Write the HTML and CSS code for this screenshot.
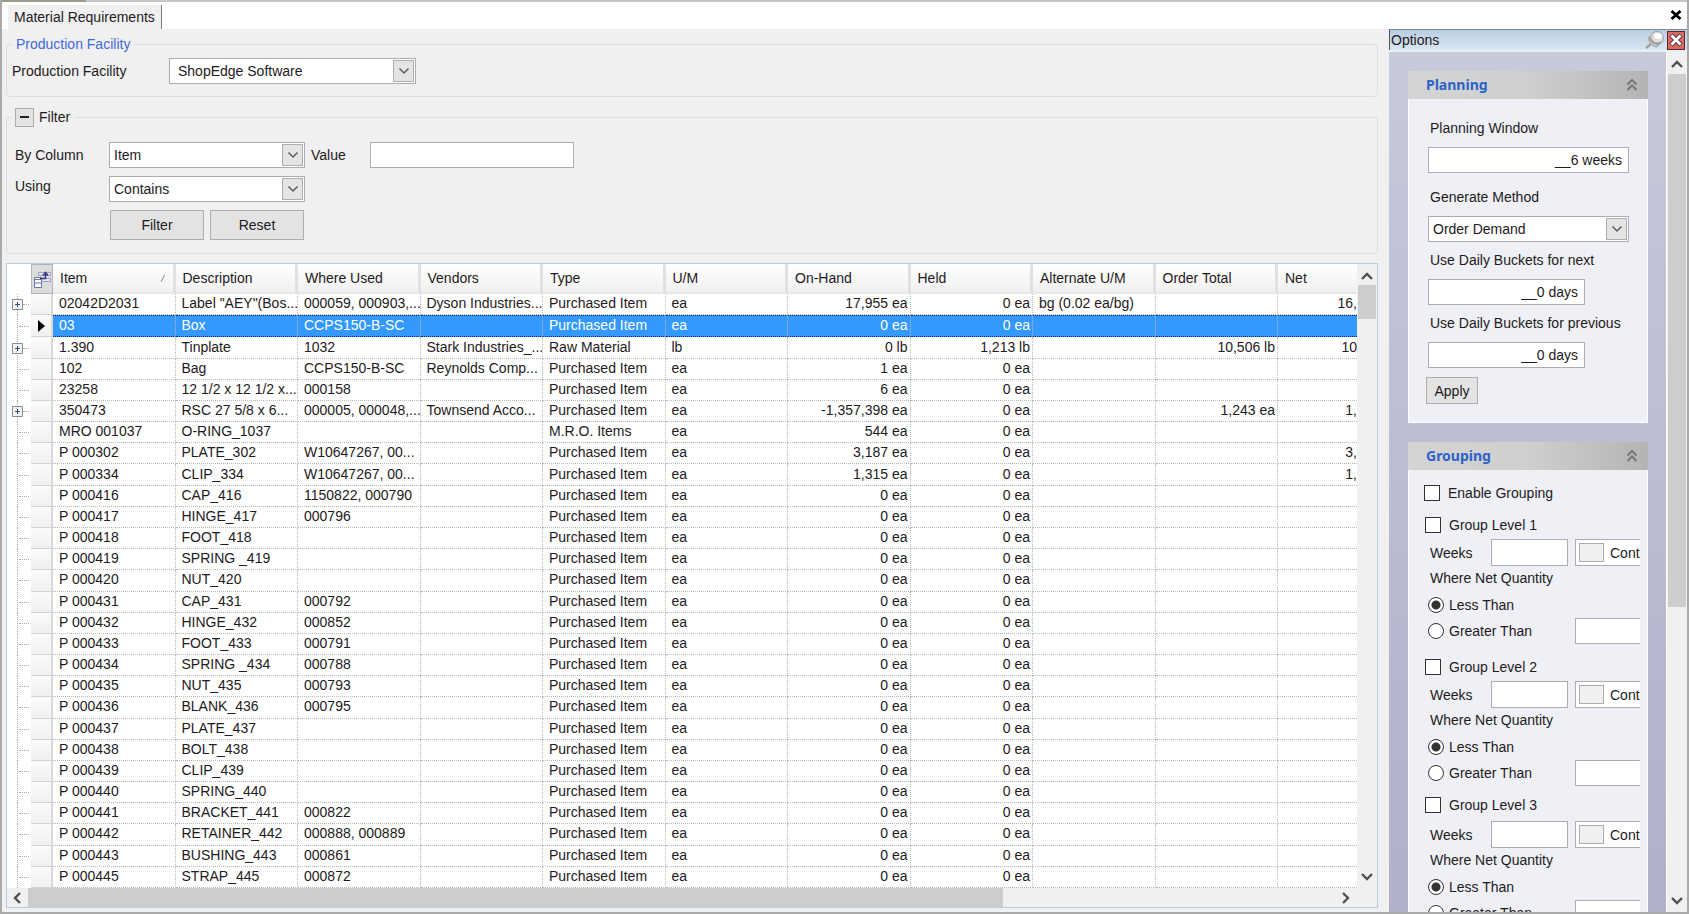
FILE: index.html
```html
<!DOCTYPE html>
<html lang="en">
<head>
<meta charset="utf-8">
<title>Material Requirements</title>
<link rel="stylesheet" href="styles.css">
</head>
<body>
<svg class="defs" aria-hidden="true">
  <symbol id="up" viewBox="0 0 12 8"><path d="M1 7 6 2l5 5" fill="none" stroke="#505050" stroke-width="2.4"/></symbol>
  <symbol id="down" viewBox="0 0 12 8"><path d="M1 1l5 5 5-5" fill="none" stroke="#505050" stroke-width="2.4"/></symbol>
  <symbol id="left" viewBox="0 0 8 12"><path d="M7 1 2 6l5 5" fill="none" stroke="#505050" stroke-width="2.4"/></symbol>
  <symbol id="right" viewBox="0 0 8 12"><path d="M1 1l5 5-5 5" fill="none" stroke="#505050" stroke-width="2.4"/></symbol>
  <symbol id="drop" viewBox="0 0 12 8"><path d="M1.5 1.5 6 6l4.500-4.500" fill="none" stroke="#5c5c5c" stroke-width="1.500"/></symbol>
  <symbol id="collapse" viewBox="0 0 12 14"><path d="M1.500 6.500 6 2l4.500 4.500M1.500 12 6 7.500l4.500 4.500" fill="none" stroke="#777" stroke-width="2"/></symbol>
</svg>
<div class="window">
  <div class="topline"></div>
  <header class="tabs">
    <button class="tab" type="button">Material Requirements</button>
    <button class="close" type="button" aria-label="Close"><svg width="12" height="10" viewBox="0 0 12 10"><path d="M1.500 1l9 8M10.500 1l-9 8" stroke="#000" stroke-width="2.800"/></svg></button>
  </header>
  <div class="work">
    <main class="main">
      <fieldset class="box facility">
        <legend class="legend-blue">Production Facility</legend>
        <label for="facility">Production Facility</label>
        <span class="combo combo-wide"><select id="facility"><option>ShopEdge Software</option></select><span class="arrow"><svg><use href="#drop"/></svg></span></span>
      </fieldset>
      <fieldset class="box filter">
        <legend class="legend-toggle"><button class="toggle" type="button" aria-label="Collapse filter"><svg width="9" height="2"><path d="M0 1h9" stroke="#222" stroke-width="2"/></svg></button><span>Filter</span></legend>
        <div class="filter-grid">
          <label for="column">By Column</label>
          <span class="combo"><select id="column"><option>Item</option></select><span class="arrow"><svg><use href="#drop"/></svg></span></span>
          <label class="value" for="value">Value</label>
          <input class="field" id="value" type="text">
          <label class="using" for="using">Using</label>
          <span class="combo"><select id="using"><option>Contains</option></select><span class="arrow"><svg><use href="#drop"/></svg></span></span>
          <div class="actions"><button class="btn" type="button">Filter</button><button class="btn" type="button">Reset</button></div>
        </div>
      </fieldset>
      <section class="grid">
        <div class="view">
          <table class="items">
            <colgroup><col class="c-tree"><col class="c-sel"><col><col><col><col><col><col><col><col><col><col><col class="c-net"></colgroup>
            <thead>
              <tr>
                <th class="corner"></th>
                <th class="chooser"><button type="button" aria-label="Choose columns"><svg width="18" height="19" viewBox="0 0 18 19"><path d="M5.500 2.500h12v3h-12z" fill="#e4e5f5" stroke="#a0a2c8"/><path d="M8.500 8.500h9v3h-9z" fill="#e4e5f5" stroke="#a0a2c8"/><path d="M1.500 7.500h7v10h-7z" fill="#fff" stroke="#7072a8"/><path d="M1 9.500h8M1 13h8" stroke="#7072a8"/><path d="M7 8.500h5.500V3M10 5.500 12.500 2.500 15 5.500" fill="none" stroke="#3a3c78" stroke-width="1.500"/></svg></button></th>
                <th><span class="sorted">Item <svg width="6" height="8"><path d="M1 8 4.500 1" stroke="#888"/></svg></span></th>
                <th>Description</th><th>Where Used</th><th>Vendors</th><th>Type</th><th>U/M</th><th>On-Hand</th><th>Held</th><th>Alternate U/M</th><th>Order Total</th><th>Net</th>
              </tr>
            </thead>
            <tbody id="rows"></tbody>
          </table>
        </div>
        <div class="vbar"><svg width="12" height="8"><use href="#up"/></svg><div class="thumb"></div><svg class="end" width="12" height="8"><use href="#down"/></svg></div>
        <div class="hbar"><svg width="8" height="12"><use href="#left"/></svg><div class="track"><div class="thumb"></div></div><svg width="8" height="12"><use href="#right"/></svg></div>
      </section>
    </main>
    <aside class="options">
      <div class="options-title">
        <span>Options</span>
        <button class="pin" type="button" aria-label="Pin"><svg width="20" height="18" viewBox="0 0 20 18"><path d="M1 17l5-4" stroke="#a0a0a0" stroke-width="2.500"/><path d="M4 6c3-1 11 5 9 9-3 3-11-4-9-9z" fill="#d4d4d4" stroke="#909090"/><circle cx="12" cy="7" r="6.500" fill="#dcdcdc" stroke="#a0a0a0"/><path d="M6 8c1 4 6 6 10 3" fill="none" stroke="#909090" stroke-width="1.500"/><ellipse cx="13" cy="5" rx="4" ry="3" fill="#fff"/></svg></button>
        <button class="shut" type="button" aria-label="Close options"><svg width="14" height="14" viewBox="0 0 14 14"><path d="M2 2l10 10M12 2 2 12" stroke="#5a4048" stroke-width="5"/><path d="M2.500 2.500l9 9M11.500 2.500l-9 9" stroke="#fff" stroke-width="2.800"/></svg></button>
      </div>
      <div class="options-body">
        <div class="panels">
          <section class="panel">
            <h2>Planning <svg width="12" height="14"><use href="#collapse"/></svg></h2>
            <div class="planning">
              <label for="window">Planning Window</label>
              <input class="field num" id="window" type="text" value="__6 weeks">
              <label for="method">Generate Method</label>
              <span class="combo"><select id="method"><option>Order Demand</option></select><span class="arrow"><svg><use href="#drop"/></svg></span></span>
              <label class="tight" for="next">Use Daily Buckets for next</label>
              <input class="field num short" id="next" type="text" value="__0 days">
              <label class="tight" for="previous">Use Daily Buckets for previous</label>
              <input class="field num short" id="previous" type="text" value="__0 days">
              <button class="btn apply" type="button">Apply</button>
            </div>
          </section>
          <section class="panel">
            <h2>Grouping <svg width="12" height="14"><use href="#collapse"/></svg></h2>
            <div class="grouping">
              <label class="check enable"><input type="checkbox">Enable Grouping</label>
              <div class="level">
                <label class="check"><input type="checkbox">Group Level 1</label>
                <div class="weeks"><label for="w1">Weeks</label><input class="field" id="w1" type="text"><button class="color" type="button"><i></i>Control</button></div>
                <div class="where">Where Net Quantity</div>
                <label class="radio"><input type="radio" name="q1" checked>Less Than</label>
                <div class="greater"><label class="radio"><input type="radio" name="q1">Greater Than</label><input class="field" type="text" aria-label="Quantity 1"></div>
              </div>
              <div class="level">
                <label class="check"><input type="checkbox">Group Level 2</label>
                <div class="weeks"><label for="w2">Weeks</label><input class="field" id="w2" type="text"><button class="color" type="button"><i></i>Control</button></div>
                <div class="where">Where Net Quantity</div>
                <label class="radio"><input type="radio" name="q2" checked>Less Than</label>
                <div class="greater"><label class="radio"><input type="radio" name="q2">Greater Than</label><input class="field" type="text" aria-label="Quantity 2"></div>
              </div>
              <div class="level last">
                <label class="check"><input type="checkbox">Group Level 3</label>
                <div class="weeks"><label for="w3">Weeks</label><input class="field" id="w3" type="text"><button class="color" type="button"><i></i>Control</button></div>
                <div class="where">Where Net Quantity</div>
                <label class="radio"><input type="radio" name="q3" checked>Less Than</label>
                <div class="greater"><label class="radio"><input type="radio" name="q3">Greater Than</label><input class="field" type="text" aria-label="Quantity 3"></div>
              </div>
            </div>
          </section>
        </div>
        <div class="vbar"><svg width="12" height="8"><use href="#up"/></svg><div class="thumb"></div><svg class="end" width="12" height="8"><use href="#down"/></svg></div>
      </div>
    </aside>
  </div>
</div>
<script src="grid.js"></script>
</body>
</html>
```
FILE: styles.css
```css
* { box-sizing: border-box; }
body { margin: 0; font: 14px/20px "Liberation Sans", Arial, sans-serif; color: #1e1a22; background: #f0f0f0; }
button, input, select { font: inherit; color: inherit; margin: 0; padding: 0; border-radius: 0; }
button { border: 0; background: none; display: flex; align-items: center; justify-content: center; }
svg { display: block; flex: none; }
.defs { position: absolute; width: 0; height: 0; }

.window { height: 100vh; display: flex; flex-direction: column; border: 2px solid #a9a9a9; border-top: 0; overflow: hidden; }
.topline { height: 2px; flex: none; background: linear-gradient(90deg, #9b9b90 84px, #c6c6c1 84px); }
.tabs { height: 27px; flex: none; display: flex; align-items: flex-end; justify-content: space-between; background: #fff; padding-left: 6px; }
.tab { height: 24px; padding: 0 6px; background: #f0f0f0; border-right: 1px solid #777; }
.close { width: 22px; height: 28px; }
.work { flex: 1; min-height: 0; display: flex; }
.main { flex: 1; min-width: 0; display: flex; flex-direction: column; padding: 6px 11px 4px 4px; }

.box { margin: 0; padding: 0; min-width: 0; border: 1px solid #d5dfe5; border-radius: 4px; }
.facility { display: flex; align-items: center; padding: 5px 0 12px 5px; }
.facility > label { width: 157px; }
.legend-blue { color: #4169e1; line-height: 18px; padding: 0 4px; }
.filter { margin-top: 10px; padding: 15px 0 13px; }
.legend-toggle { display: flex; align-items: center; gap: 5px; margin-left: 4px; padding: 0 4px; }
.toggle { width: 19px; height: 19px; border: 1px solid #adadad; background: #e3e3e3; }
.filter-grid { display: grid; grid-template-columns: 94px 196px 65px 204px; row-gap: 8px; align-items: center; padding-left: 8px; }
.value { padding-left: 6px; }
.using { align-self: start; }
.actions { grid-column: 2; grid-row: 3; display: flex; gap: 6px; padding-left: 1px; }
.btn { border: 1px solid #adadad; background: #e3e3e3; }
.actions .btn { width: 94px; height: 30px; }

.combo { position: relative; display: block; height: 26px; }
.combo select { width: 100%; height: 100%; appearance: none; border: 1px solid #abadb3; background: #fff; padding-left: 4px; }
.combo-wide { width: 247px; }
.combo-wide select { padding-left: 8px; }
.arrow { position: absolute; top: 2px; right: 2px; bottom: 2px; width: 21px; display: flex; align-items: center; justify-content: center; border: 1px solid #adadad; background: #e4e4e4; pointer-events: none; }
.arrow svg { width: 12px; height: 8px; }
.field { height: 26px; width: 100%; border: 1px solid #abadb3; background: #fff; }

.grid { flex: 1; min-height: 0; margin-top: 9px; display: grid; grid-template-columns: minmax(0, 1fr) 20px; grid-template-rows: minmax(0, 1fr) 19px; border: 1px solid #b9cbe0; background: #f0f0f0; }
.view { position: relative; overflow: hidden; background: #fff; }
.items { width: 100%; height: 100%; table-layout: fixed; border-collapse: separate; border-spacing: 0; }
.c-tree { width: 24px; }
.c-sel { width: 22px; }
.c-net { width: 79px; }
.items th { height: 30px; padding: 0 7px; text-align: left; font-weight: normal; background: linear-gradient(#fff, #f1f1f1); border-right: 3px solid #dfe2e2; border-bottom: 2px solid #e6e8e8; }
.items th:last-child { border-right: 0; }
.items .corner { background: #fff; border: 0; }
.items .chooser { padding: 0; border: 1px solid #b4b4b4; background: #dcdcdc; }
.chooser button { width: 100%; }
.sorted { display: flex; align-items: center; justify-content: space-between; }
.items td { padding: 0 2px 1px 6px; line-height: 17px; white-space: nowrap; overflow: hidden; border-right: 1px dotted #b8b8b8; border-bottom: 1px dotted #b8b8b8; }
.items td.num { text-align: right; }
.items td:last-child { padding-right: 0; border-right: 0; }
.items .tree { padding: 0; border: 0; background: repeating-linear-gradient(#aaa 0 1px, #fff 1px 2px) 10px 0 / 1px 100% no-repeat; }
.node { display: flex; align-items: center; padding-left: 5px; }
.node::after { content: ""; flex: 1; border-top: 1px dotted #aaa; margin-right: 2px; }
.node.leaf { padding-left: 12px; }
.items .sel { padding: 0 0 0 7px; background: linear-gradient(#fbfbfb, #f0f0f0); border-right: 2px solid #d9d9d9; border-bottom: 1px solid #d4d4d4; }
.current td { color: #fff; background: #39f; border-top: 1px dotted #06336b; border-bottom-color: #06336b; }
.current .sel, .current .tree { border-top: 0; }

.thumb { background: #cdcdcd; }
.vbar { display: flex; flex-direction: column; align-items: center; padding: 8px 1px 7px 0; background: #f0f0f0; }
.vbar .thumb { width: 18px; height: 34px; margin-top: 5px; }
.vbar .end { margin-top: auto; }
.hbar { grid-column: 1; display: flex; align-items: center; padding: 0 7px 0 6px; gap: 7px; }
.track { flex: 1; height: 100%; }
.track .thumb { width: 74.6%; height: 100%; }

.options { width: 298px; flex: none; display: flex; flex-direction: column; }
.options-title { height: 21px; flex: none; display: flex; align-items: center; gap: 2px; padding: 0 2px 0 1px; border-left: 1px solid #555; border-top: 1px solid #7c8894; background: linear-gradient(#b9cde0, #dae7f4); }
.options-title span { flex: 1; }
.shut { width: 18px; height: 19px; border: 1px solid #5c2430; background: #dc6a62; }
.options-body { flex: 1; min-height: 0; display: flex; border-top: 2px solid #eceef2; }
.panels { flex: 1; min-width: 0; overflow: hidden; padding: 19px 18px 0 19px; border-right: 1px solid #fff; background: linear-gradient(#c6cada, #b0b0ca); }
.options .vbar { width: 20px; flex: none; padding-right: 0; }
.options .vbar .thumb { height: 533px; margin-top: 6px; }
.panel { margin-bottom: 19px; background: #eff0f5; border: 1px solid #fff; border-top: 0; }
.panel h2 { margin: 0 -1px; height: 28px; padding: 0 10px 0 18px; display: flex; align-items: center; justify-content: space-between; font: bold 14px/28px "Noto Sans", sans-serif; color: #2c62c9; background: linear-gradient(90deg, #d4d4d4, #cfcfcf 50%, #b4b4b4); }
.planning { display: flex; flex-direction: column; padding: 19px 18px 18px 19px; }
.planning label { padding-left: 2px; margin-bottom: 9px; }
.planning label:not(:first-child) { margin-top: 14px; }
.planning label.tight { margin-top: 8px; }
.num.field { text-align: right; padding-right: 6px; }
.short { width: 157px; }
.apply { width: 52px; height: 27px; margin: 9px 0 0 -2px; }

.grouping { margin-right: 7px; padding: 8px 0 0 15px; overflow: hidden; }
.check, .radio { display: flex; align-items: center; }
.check { gap: 8px; height: 29px; }
.enable { margin-bottom: 3px; }
.check input { appearance: none; width: 16px; height: 16px; border: 1px solid #333; background: #fff; }
.level { padding-left: 1px; }
.level + .level { margin-top: 8px; }
.level.last { margin-top: 3px; }
.last .check { height: 32px; }
.weeks { display: grid; grid-template-columns: 61px 77px 65px; align-items: center; padding-left: 5px; }
.weeks .field { height: 27px; }
.color { width: 100px; height: 27px; margin-left: 7px; justify-content: flex-start; gap: 6px; padding-left: 3px; border: 1px solid #abadb3; background: #fff; }
.color i { width: 25px; height: 19px; border: 1px solid #adadad; background: #f0f0f0; }
.where { padding: 2px 0 4px 5px; }
.radio { gap: 5px; height: 26px; padding-left: 3px; }
.radio input { appearance: none; width: 16px; height: 16px; border: 1px solid #333; border-radius: 50%; background: #fff; }
.radio input:checked { background: radial-gradient(#333 4px, #fff 5px); }
.greater { display: grid; grid-template-columns: 150px 1fr; }
.greater .field { width: 100px; }
```
FILE: grid.js
```js
// name, description, where used, vendors, type, unit, on-hand, held, alternate, order total, net, expandable
const P = "Purchased Item";
const rows = [
  ["02042D2031", 'Label "AEY"(Bos...', "000059, 000903,...", "Dyson Industries...", P, "ea", "17,955 ea", "0 ea", "bg (0.02 ea/bg)", "", "16,", 1],
  ["03", "Box", "CCPS150-B-SC", "", P, "ea", "0 ea", "0 ea", "", "", "", 0],
  ["1.390", "Tinplate", "1032", "Stark Industries_...", "Raw Material", "lb", "0 lb", "1,213 lb", "", "10,506 lb", "10", 1],
  ["102", "Bag", "CCPS150-B-SC", "Reynolds Comp...", P, "ea", "1 ea", "0 ea", "", "", "", 0],
  ["23258", "12 1/2 x 12 1/2 x...", "000158", "", P, "ea", "6 ea", "0 ea", "", "", "", 0],
  ["350473", "RSC 27 5/8 x 6...", "000005, 000048,...", "Townsend Acco...", P, "ea", "-1,357,398 ea", "0 ea", "", "1,243 ea", "1,", 1],
  ["MRO 001037", "O-RING_1037", "", "", "M.R.O. Items", "ea", "544 ea", "0 ea", "", "", "", 0],
  ["P 000302", "PLATE_302", "W10647267, 00...", "", P, "ea", "3,187 ea", "0 ea", "", "", "3,", 0],
  ["P 000334", "CLIP_334", "W10647267, 00...", "", P, "ea", "1,315 ea", "0 ea", "", "", "1,", 0]
];
const parts = [
  ["416", "CAP_416", "1150822, 000790"], ["417", "HINGE_417", "000796"], ["418", "FOOT_418", ""],
  ["419", "SPRING _419", ""], ["420", "NUT_420", ""], ["431", "CAP_431", "000792"],
  ["432", "HINGE_432", "000852"], ["433", "FOOT_433", "000791"], ["434", "SPRING _434", "000788"],
  ["435", "NUT_435", "000793"], ["436", "BLANK_436", "000795"], ["437", "PLATE_437", ""],
  ["438", "BOLT_438", ""], ["439", "CLIP_439", ""], ["440", "SPRING_440", ""],
  ["441", "BRACKET_441", "000822"], ["442", "RETAINER_442", "000888, 000889"],
  ["443", "BUSHING_443", "000861"], ["445", "STRAP_445", "000872"]
];
for (const [n, d, w] of parts) rows.push(["P 000" + n, d, w, "", P, "ea", "0 ea", "0 ea", "", "", "", 0]);

const plus = '<svg width="11" height="11"><path d="M.5.5h10v10H.5z" fill="#f4f4f4" stroke="#8c8c8c"/><path d="M3 5.500h5M5.500 3v5" stroke="#2c4a9c"/></svg>';
const pointer = '<svg width="7" height="12"><path d="M0 0l7 6-7 6z" fill="#000"/></svg>';
const numeric = [6, 7, 9, 10];
const body = document.getElementById("rows");
rows.forEach((r, i) => {
  const tr = body.insertRow();
  if (i === 1) tr.className = "current";
  const tree = tr.insertCell();
  tree.className = "tree";
  tree.innerHTML = r[11] ? `<div class="node">${plus}</div>` : '<div class="node leaf"></div>';
  const sel = tr.insertCell();
  sel.className = "sel";
  if (i === 1) sel.innerHTML = pointer;
  for (let c = 0; c < 11; c++) {
    const td = tr.insertCell();
    td.textContent = r[c];
    if (numeric.includes(c)) td.className = "num";
  }
});
```
